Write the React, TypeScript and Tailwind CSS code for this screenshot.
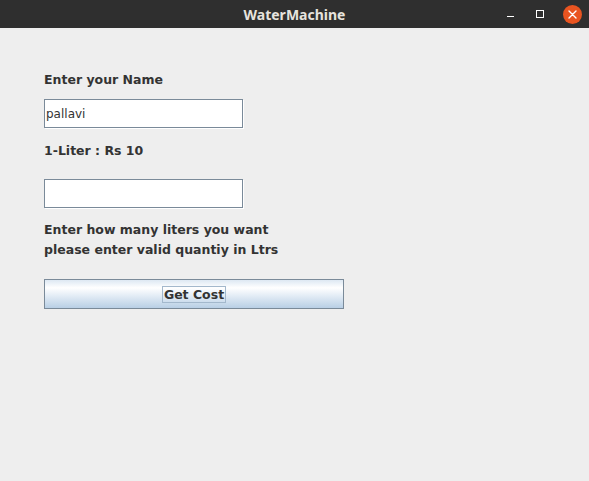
import React, { useState } from 'react';

const WaterMachine = () => {
  const [name, setName] = useState('pallavi');
  const [liters, setLiters] = useState('');

  return (
    <div className="w-[589px] h-[481px] flex flex-col bg-[#eeeeee] overflow-hidden" style={{ fontFamily: '"DejaVu Sans", sans-serif' }}>
      {/* Title bar */}
      <div className="h-[28px] shrink-0 bg-[#2f2f2f] flex items-center relative">
        <div className="flex-1 text-center text-[14px] font-bold text-[#e6e3de]" style={{ fontFamily: '"Noto Sans", sans-serif' }}>
          WaterMachine
        </div>
        <div className="absolute right-0 top-0 h-[28px] flex items-center">
          <div className="w-[30px] h-[28px] flex items-center justify-center">
            <div className="w-[7px] h-[1px] bg-white mt-[4px]" />
          </div>
          <div className="w-[30px] h-[28px] flex items-center justify-center">
            <div className="w-[8px] h-[8px] border border-white" />
          </div>
          <div className="w-[34px] h-[28px] flex items-center justify-center">
            <div className="w-[19px] h-[19px] rounded-full bg-[#e95420] flex items-center justify-center">
              <svg width="9" height="9" viewBox="0 0 9 9">
                <path d="M1 1 L8 8 M8 1 L1 8" stroke="white" strokeWidth="1.4" strokeLinecap="round" />
              </svg>
            </div>
          </div>
        </div>
      </div>

      {/* Content */}
      <div className="flex-1 pl-[44px] pt-[42px] flex flex-col text-[12.5px] text-[#333333]">
        <div className="h-[20px] leading-[20px] font-bold">Enter your Name</div>
        <input
          value={name}
          onChange={e => setName(e.target.value)}
          className="mt-[9px] w-[199px] h-[29px] bg-white border border-[#7a8a99] shadow-[1px_1px_0_#ffffff] px-[1px] text-[12px] text-[#333333] outline-none"
          style={{ fontFamily: '"DejaVu Sans", sans-serif' }}
        />
        <div className="mt-[13px] h-[20px] leading-[20px] font-bold">1-Liter : Rs 10</div>
        <input
          value={liters}
          onChange={e => setLiters(e.target.value)}
          className="mt-[18px] w-[199px] h-[29px] bg-white border border-[#7a8a99] shadow-[1px_1px_0_#ffffff] px-[1px] text-[12px] text-[#333333] outline-none"
        />
        <div className="mt-[12px] font-bold leading-[20px]">
          <div>Enter how many liters you want</div>
          <div>please enter valid quantiy in Ltrs</div>
        </div>
        <button
          className="mt-[19px] w-[300px] h-[30px] border border-[#7a8a99] flex items-center justify-center bg-[linear-gradient(to_bottom,#dde8f3_0%,#ffffff_28%,#e4edf6_55%,#b8cfe5_100%)]"
        >
          <span className="mt-[1px] border border-[#a3b8cc] px-[1px] leading-[15px] text-[12.5px] font-bold text-[#333333]">Get Cost</span>
        </button>
      </div>
    </div>
  );
};

export default function App() {
  return <WaterMachine />;
}
